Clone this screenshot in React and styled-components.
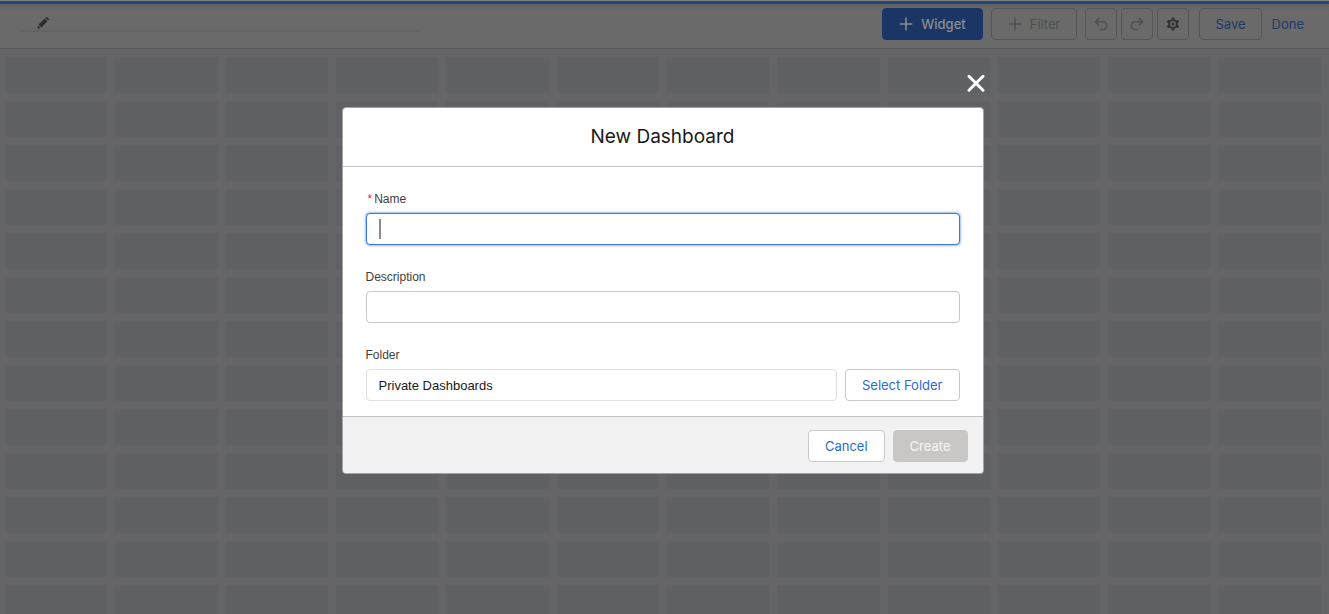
import React from "react";
import styled, { createGlobalStyle, css } from "styled-components";

const ui = '"Inter", "Liberation Sans", sans-serif';
const form = '"Liberation Sans", Arial, sans-serif';

const GlobalStyle = createGlobalStyle`
  *, *::before, *::after { box-sizing: border-box; }
  body { margin: 0; font-family: ${ui}; font-size: 13px; background: #656567; }
  button, input { font: inherit; margin: 0; }
`;

const Page = styled.div`
  height: 100vh;
  overflow: hidden;
  display: flex;
  flex-direction: column;
  background: #656567;
`;

const Toolbar = styled.header`
  flex: none;
  display: flex;
  align-items: center;
  justify-content: space-between;
  padding: 4px 25px 8px 20px;
  border-bottom: 1px solid #59595c;
  background: linear-gradient(#606060, #6a6a6a 6px);
`;

const TopBar = styled.div`
  flex: none;
  height: 4px;
  border-top: 1px solid #838383;
  background: #24477a;
`;

const TitleField = styled.div`
  width: 401px;
  height: 24px;
  padding: 0 17px 1px;
  border-bottom: 2px solid #646466;
  margin-bottom: 8px;
  display: flex;
  align-items: flex-end;
  align-self: flex-start;
`;

const Actions = styled.div`
  display: flex;
  align-items: center;
  gap: ${(p) => p.$gap}px;
`;

const IconButton = styled.button`
  display: flex;
  align-items: center;
  justify-content: center;
  padding: 0;
  border: 0;
  background: transparent;
  color: ${(p) => p.$color || "#2e2e2e"};
`;

const ToolButton = styled.button`
  height: 32px;
  padding: 0 ${(p) => (p.$square ? 0 : p.$pad || 16)}px;
  ${(p) => p.$square && css`width: 32px;`}
  display: flex;
  align-items: center;
  justify-content: center;
  gap: 8px;
  border: 1px solid #565656;
  border-radius: 4px;
  background: transparent;
  color: ${(p) => p.$color || "#505050"};
  ${(p) => p.$primary && css`
    background: #1b3664;
    border-color: #1b3664;
    color: #8b8d91;
    font-weight: 500;
  `}
`;

const DoneLink = styled.a`
  color: #1d3a6b;
  text-decoration: none;
`;

const Canvas = styled.main`
  flex: 1;
  min-height: 0;
  overflow: hidden;
  display: grid;
  grid-template-columns: repeat(12, 1fr);
  grid-auto-rows: 36px;
  gap: 8px;
  padding: 8px 8px 0 5px;
`;

const Tile = styled.div`
  background: #606164;
`;

const Overlay = styled.div`
  position: fixed;
  inset: 0;
  padding: 107px 4px 0 0;
  display: flex;
  align-items: flex-start;
  justify-content: center;
`;

const Dialog = styled.section`
  position: relative;
  width: 90%;
  max-width: 642px;
  background: #fff;
  border: 1px solid #a3a3a4;
  border-radius: 4px;
`;

const CloseButton = styled(IconButton)`
  position: absolute;
  top: -34px;
  right: -2px;
`;

const DialogHeader = styled.div`
  height: 59px;
  border-bottom: 1px solid #c4c4c4;
  display: flex;
  align-items: center;
  justify-content: center;
`;

const DialogTitle = styled.h2`
  margin: 0;
  font-size: 19px;
  line-height: 24px;
  font-weight: 400;
  color: #181818;
`;

const DialogBody = styled.div`
  padding: 24px 23px 15px;
  display: flex;
  flex-direction: column;
  gap: 24px;
  font-family: ${form};
`;

const Field = styled.div`
  position: relative;
  display: flex;
  flex-direction: column;
  gap: 6px;
`;

const Label = styled.label`
  font-size: 12px;
  line-height: 16px;
  color: #3e3e3c;
`;

const Required = styled.span`
  color: #d92f2f;
  padding: 0 2px;
`;

const TextInput = styled.input`
  flex: 1;
  min-width: 0;
  min-height: 32px;
  padding: 0 12px;
  border: 1px solid ${(p) => (p.readOnly ? "#e0e0e0" : "#c9c9c9")};
  border-radius: 4px;
  background: #fff;
  color: #181818;
  outline: 0;
  caret-color: transparent;
  &:focus {
    border-color: #3b78d8;
    box-shadow: 0 0 3px #3b78d8;
  }
`;

const Caret = styled.span`
  position: absolute;
  left: 13px;
  bottom: 6px;
  width: 2px;
  height: 20px;
  background: #8c8c8c;
`;

const Row = styled.div`
  display: flex;
  gap: 8px;
`;

const DialogButton = styled.button`
  height: 32px;
  padding: 0 16px;
  border: 1px solid #c9c9c9;
  border-radius: 4px;
  background: #fff;
  color: #2a6bd2;
  font-family: ${ui};
  &:disabled {
    background: #c9c7c5;
    border-color: #c9c7c5;
    color: #f5f5f5;
  }
`;

const DialogFooter = styled.div`
  display: flex;
  justify-content: flex-end;
  gap: 8px;
  padding: 13px 15px 11px;
  border-top: 1px solid #c4c4c4;
  border-radius: 0 0 3px 3px;
  background: #f2f2f2;
`;

const Plus = () => (
  <svg width="14" height="14" viewBox="0 0 14 14" fill="none" stroke="currentColor" strokeWidth="1.6" strokeLinecap="round" aria-hidden="true">
    <path d="M7 1.3v11.4M1.3 7h11.4" />
  </svg>
);

const Pencil = () => (
  <svg width="12" height="12" viewBox="0 0 12 12" fill="currentColor" aria-hidden="true">
    <path d="M1.6 7.6 7.7 1.5l2.8 2.8-6.1 6.1zM8.4.9l.6-.6c.4-.4.9-.4 1.3 0l1.4 1.4c.4.4.4.9 0 1.3l-.6.6zM1.1 8.4l2.5 2.5-3 .9c-.3.1-.5-.1-.4-.4z" />
  </svg>
);

const Undo = ({ flip }) => (
  <svg width="14" height="14" viewBox="0 0 14 14" fill="none" stroke="currentColor" strokeWidth="1.6" strokeLinecap="round" strokeLinejoin="round" aria-hidden="true">
    <g transform={flip ? "translate(14 0) scale(-1 1)" : undefined}>
      <path d="M4.6 1.5 1.4 4.7l3.2 3.2M1.6 4.7h7.2a3.9 3.9 0 0 1 0 7.8H6.6" />
    </g>
  </svg>
);

const Gear = () => (
  <svg width="14" height="14" viewBox="0 0 14 14" fill="none" stroke="currentColor" aria-hidden="true">
    <circle cx="7" cy="7" r="3.9" strokeWidth="1.9" />
    <circle cx="7" cy="7" r="1.5" fill="currentColor" stroke="none" />
    <path strokeWidth="2.6" d="M7 .6v2M7 11.4v2M1.4 3.8l1.8 1M10.8 9.2l1.8 1M1.4 10.2l1.8-1M10.8 4.8l1.8-1" />
  </svg>
);

const Cross = () => (
  <svg width="18" height="18" viewBox="0 0 18 18" fill="none" stroke="#fff" strokeWidth="3" strokeLinecap="round" aria-hidden="true">
    <path d="M2 2.3l14 14M16 2.3l-14 14" />
  </svg>
);

const tiles = Array.from({ length: 13 * 12 }, (_, i) => i);

export default function App() {
  return (
    <>
      <GlobalStyle />
      <Page>
        <TopBar />
        <Toolbar>
          <TitleField>
            <IconButton aria-label="Edit name"><Pencil /></IconButton>
          </TitleField>
          <Actions $gap={10}>
            <Actions $gap={8}>
              <ToolButton $primary><Plus />Widget</ToolButton>
              <ToolButton disabled><Plus />Filter</ToolButton>
              <Actions $gap={4}>
                <ToolButton $square disabled aria-label="Undo"><Undo /></ToolButton>
                <ToolButton $square disabled aria-label="Redo"><Undo flip /></ToolButton>
                <ToolButton $square $color="#303030" aria-label="Settings"><Gear /></ToolButton>
              </Actions>
            </Actions>
            <ToolButton $color="#1d3a6b" $pad={15}>Save</ToolButton>
            <DoneLink href="#done">Done</DoneLink>
          </Actions>
        </Toolbar>
        <Canvas>{tiles.map((i) => <Tile key={i} />)}</Canvas>
      </Page>
      <Overlay>
        <Dialog role="dialog" aria-modal="true" aria-labelledby="dialog-title">
          <CloseButton aria-label="Close"><Cross /></CloseButton>
          <DialogHeader>
            <DialogTitle id="dialog-title">New Dashboard</DialogTitle>
          </DialogHeader>
          <DialogBody>
            <Field>
              <Label htmlFor="name"><Required>*</Required>Name</Label>
              <TextInput id="name" required autoFocus />
              <Caret />
            </Field>
            <Field>
              <Label htmlFor="description">Description</Label>
              <TextInput id="description" />
            </Field>
            <Field>
              <Label htmlFor="folder">Folder</Label>
              <Row>
                <TextInput id="folder" readOnly value="Private Dashboards" />
                <DialogButton>Select Folder</DialogButton>
              </Row>
            </Field>
          </DialogBody>
          <DialogFooter>
            <DialogButton>Cancel</DialogButton>
            <DialogButton disabled>Create</DialogButton>
          </DialogFooter>
        </Dialog>
      </Overlay>
    </>
  );
}
